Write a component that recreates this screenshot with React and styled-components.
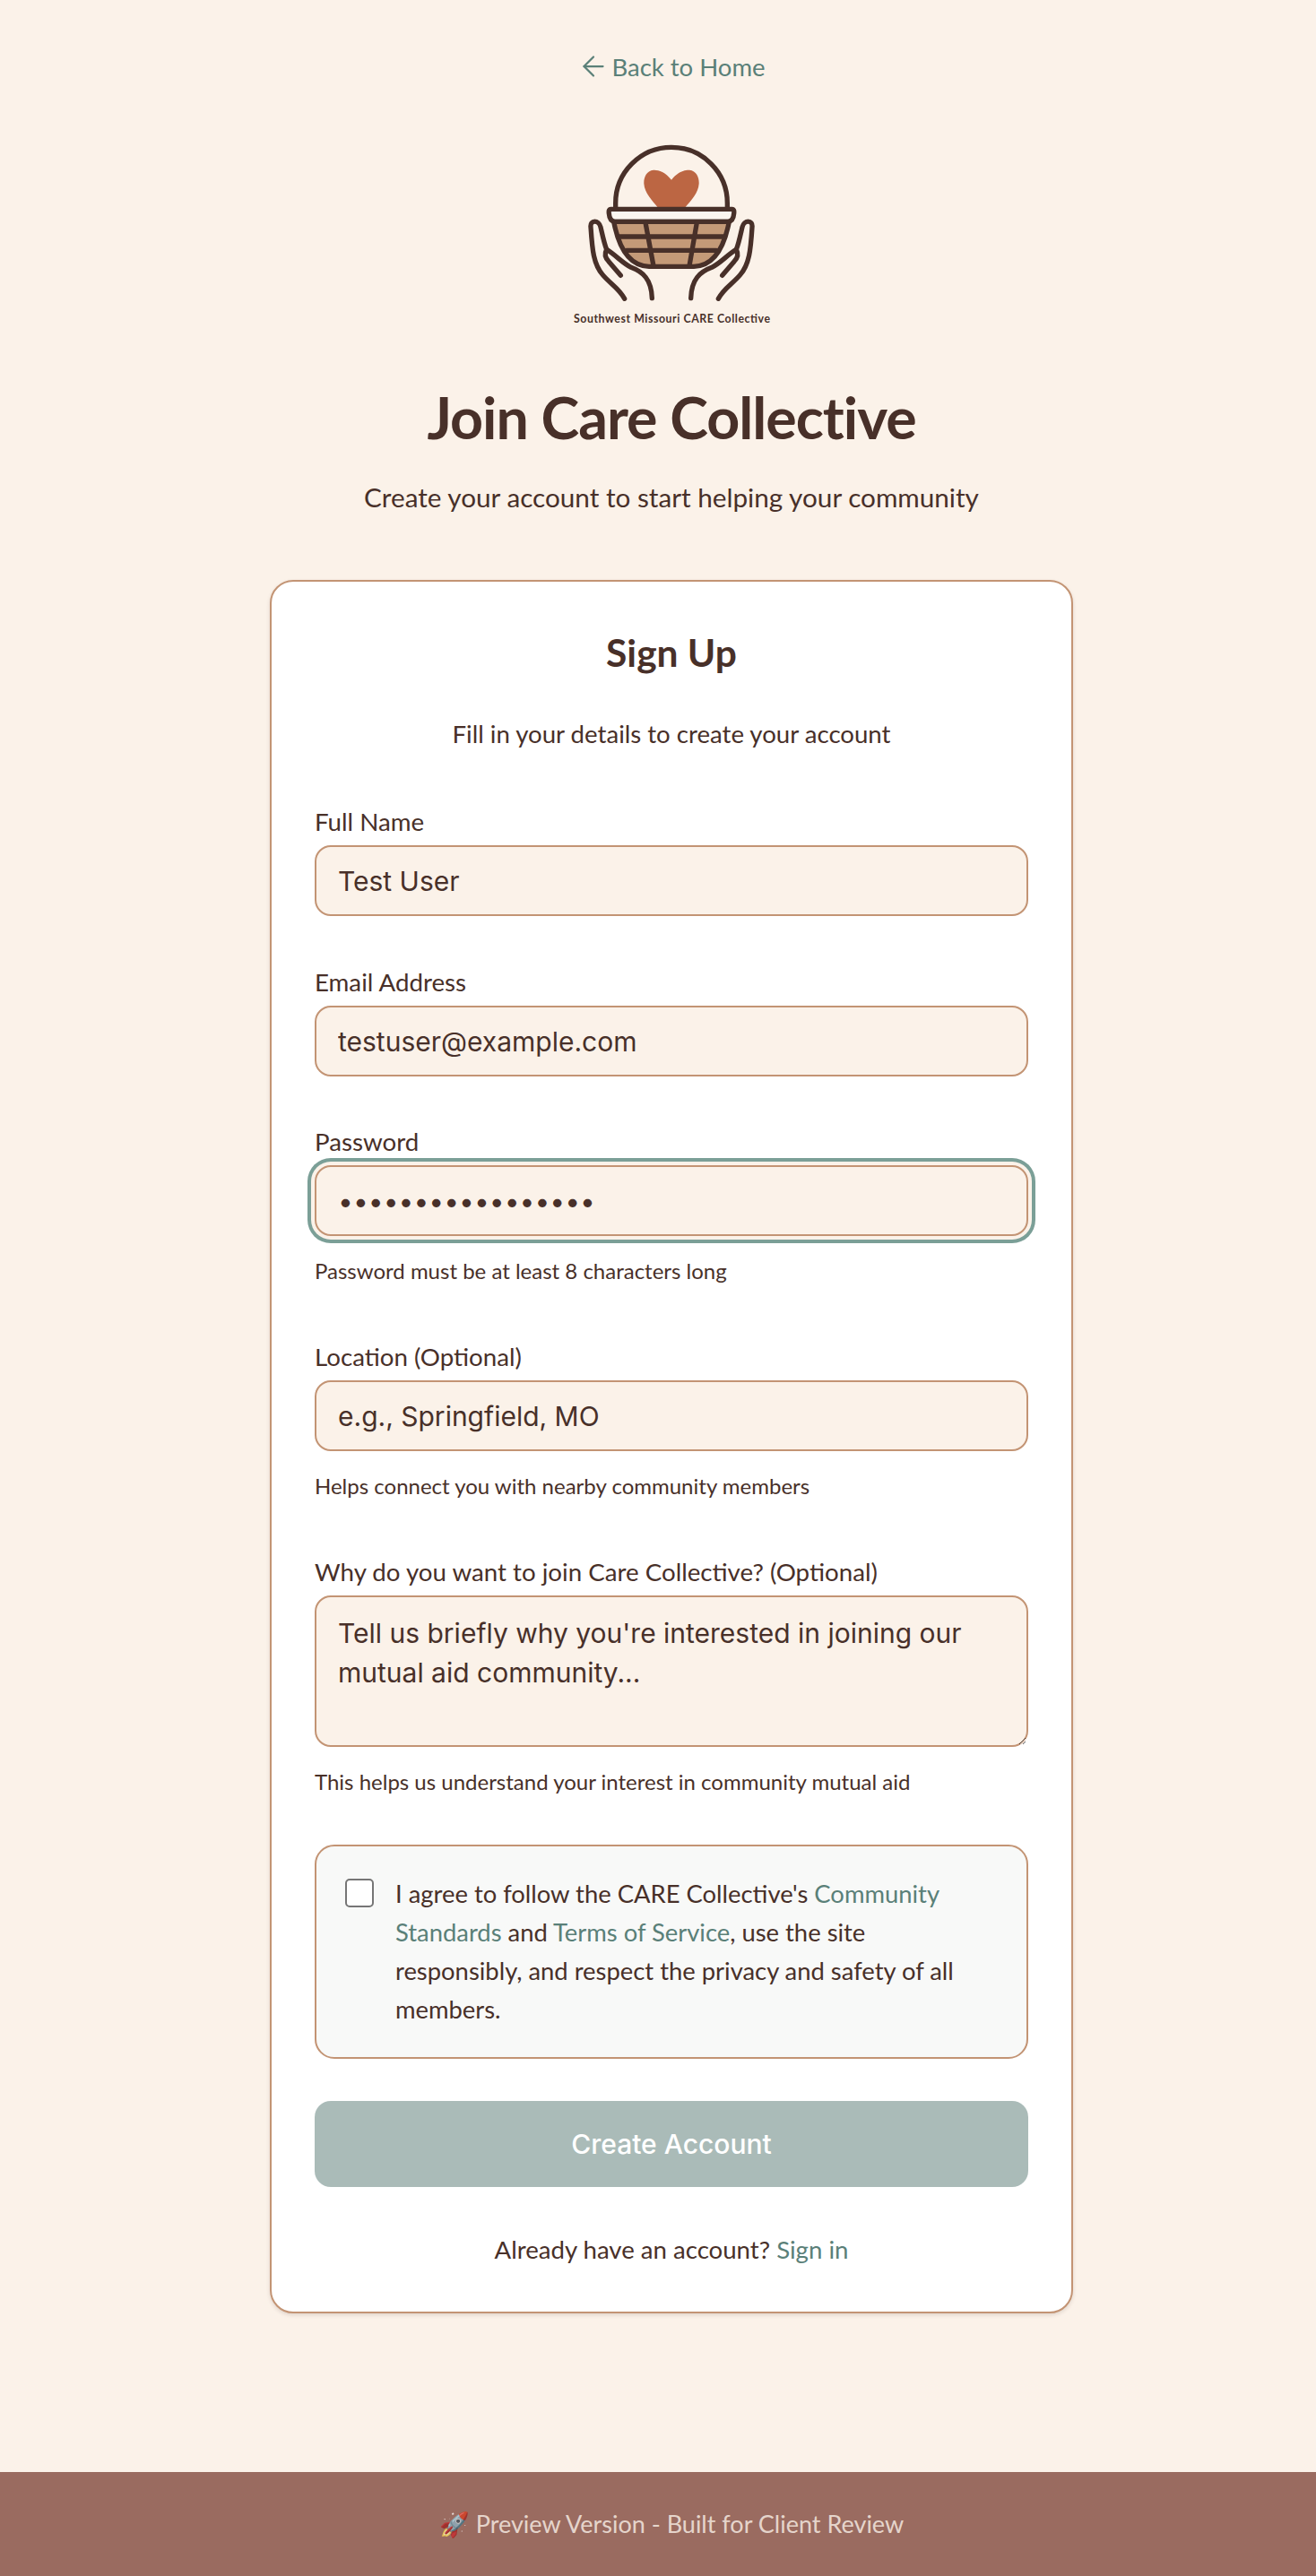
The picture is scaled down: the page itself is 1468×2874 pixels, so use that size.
import React from 'react';
import styled, { createGlobalStyle } from 'styled-components';
import { ArrowLeft } from 'lucide-react';

const cream = '#fbf2e9';
const brown = '#483029';
const teal = '#5a8078';
const tan = '#c39474';
const bodyFont = '"Lato", "Open Sans", sans-serif';
const fieldFont = '"Inter", "Liberation Sans", sans-serif';

const GlobalStyle = createGlobalStyle`
  html, body {
    margin: 0;
    padding: 0;
    background: ${cream};
  }
  * {
    box-sizing: border-box;
  }
`;

const Page = styled.div`
  width: 1468px;
  min-height: 2874px;
  display: flex;
  flex-direction: column;
  background: ${cream};
  color: ${brown};
  font-family: ${bodyFont};
`;

const Main = styled.main`
  flex: 1;
  width: 896px;
  margin-left: 301px;
  padding-top: 54px;
  display: flex;
  flex-direction: column;
  align-items: center;
`;

const BackLink = styled.a`
  display: flex;
  align-items: center;
  gap: 2px;
  height: 40px;
  color: ${teal};
  font-size: 27.5px;
  text-decoration: none;
`;

const LogoWrap = styled.div`
  width: 240px;
  height: 240px;
  margin-top: 56px;
`;

const Title = styled.h1`
  margin: 35px 0 0;
  font-size: 64.5px;
  line-height: 80px;
  font-weight: 700;
  letter-spacing: -1px;
`;

const Subtitle = styled.p`
  margin: 30px 0 0;
  font-size: 29.7px;
  line-height: 40px;
`;

const Card = styled.section`
  width: 100%;
  height: 1934px;
  margin-top: 72px;
  padding: 51px 48px 0;
  background: #fff;
  border: 2px solid ${tan};
  border-radius: 26px;
  box-shadow: 0 2px 4px rgba(72, 48, 41, 0.15);
`;

const CardTitle = styled.h2`
  margin: 0;
  text-align: center;
  font-size: 42.5px;
  line-height: 56px;
  font-weight: 700;
`;

const CardLead = styled.p`
  margin: 46px 0 0;
  text-align: center;
  font-size: 27.6px;
  line-height: 34px;
`;

const Field = styled.div`
  margin-top: ${(props) => props.$gap}px;
`;

const Label = styled.label`
  display: block;
  height: 28px;
  margin-bottom: 12px;
  font-size: 27.7px;
  line-height: 28px;
`;

const TextInput = styled.input`
  display: block;
  width: 100%;
  height: 79px;
  padding: 0 24px;
  background: ${cream};
  border: 2px solid ${tan};
  border-radius: 18px;
  color: ${brown};
  font-family: ${fieldFont};
  font-size: 30px;
  outline: none;
  box-shadow: ${(props) => (props.$focused ? `0 0 0 4px ${cream}, 0 0 0 8px #7b9f97` : 'none')};

  &::placeholder {
    color: ${brown};
    opacity: 1;
  }
`;

const TextArea = styled.textarea`
  display: block;
  width: 100%;
  height: 169px;
  padding: 18px 24px;
  background: ${cream};
  border: 2px solid ${tan};
  border-radius: 18px;
  color: ${brown};
  font-family: ${fieldFont};
  font-size: 30px;
  line-height: 44px;
  outline: none;
  resize: vertical;

  &::placeholder {
    color: ${brown};
    opacity: 1;
  }
`;

const Hint = styled.p`
  margin: 25px 0 0;
  font-size: 24px;
  line-height: 28px;
`;

const AgreeBox = styled.div`
  display: flex;
  align-items: flex-start;
  gap: 24px;
  height: 239px;
  margin-top: 56px;
  padding: 36px 60px 0 32px;
  background: #f8f9f8;
  border: 2px solid ${tan};
  border-radius: 22px;
`;

const Checkbox = styled.input`
  appearance: none;
  flex: none;
  width: 32px;
  height: 32px;
  margin: 0;
  background: #fff;
  border: 2px solid #767676;
  border-radius: 5px;
`;

const AgreeText = styled.label`
  margin-top: -5px;
  font-size: 27.4px;
  line-height: 43px;
`;

const TextLink = styled.a`
  color: ${teal};
  text-decoration: none;
`;

const SubmitButton = styled.button`
  display: block;
  width: 100%;
  height: 96px;
  margin-top: 47px;
  background: #aabbb8;
  border: none;
  border-radius: 18px;
  color: #fff;
  font-family: ${fieldFont};
  font-size: 30px;
  font-weight: 500;
`;

const SignInLine = styled.p`
  margin: 53px 0 0;
  text-align: center;
  font-size: 27.6px;
  line-height: 34px;
`;

const PreviewBar = styled.footer`
  width: 100%;
  height: 116px;
  padding-left: 30px;
  display: flex;
  align-items: center;
  justify-content: center;
  background: #9a6b60;
  color: rgba(251, 242, 233, 0.8);
  font-size: 27px;
`;

const handPaths = (
  <>
    <path d="M408 880 C390 845 360 830 335 800 C305 765 300 720 295 640 C292 615 322 615 328 640 C335 670 340 695 348 715 C380 735 400 760 430 775 C470 790 498 815 500 878" />
    <path d="M348 715 C340 730 345 745 355 755 L395 802" />
  </>
);

function BasketLogo() {
  return (
    <svg width="240" height="240" viewBox="205 330 720 720" role="img" aria-label="Southwest Missouri CARE Collective logo">
      <g fill="none" stroke={brown} strokeWidth="16" strokeLinecap="round" strokeLinejoin="round">
        <path d="M378 578 V560 A187 187 0 0 1 752 560 V578" />
        <path
          d="M565 482 C545 455 520 448 505 449 C480 452 472 475 473 495 C475 525 500 550 520 575 H610 C632 550 655 525 657 495 C658 475 650 452 625 449 C610 448 585 455 565 482 Z"
          fill="#bc6643"
          stroke="none"
        />
        <path d="M362 580 H768 Q776 580 774 595 Q772 620 755 622 H375 Q358 620 356 595 Q354 580 362 580 Z" fill="#fbf6f0" />
        <path d="M372 622 H758 C745 690 715 770 640 772 H490 C415 770 385 690 372 622 Z" fill="#c49a78" />
        <path d="M390 672 H742 M415 718 H715 M478 625 L505 770 M650 625 L625 770" />
        <g>{handPaths}</g>
        <g transform="translate(1130 0) scale(-1 1)">{handPaths}</g>
      </g>
      <text x="238" y="960" textLength="657" fontFamily={bodyFont} fontSize="37" fontWeight="700" fill={brown}>
        Southwest Missouri CARE Collective
      </text>
    </svg>
  );
}

export default function App() {
  return (
    <Page>
      <GlobalStyle />
      <Main>
        <BackLink href="#">
          <ArrowLeft size={36} strokeWidth={1.5} />
          Back to Home
        </BackLink>
        <LogoWrap>
          <BasketLogo />
        </LogoWrap>
        <Title>Join Care Collective</Title>
        <Subtitle>Create your account to start helping your community</Subtitle>
        <Card>
          <CardTitle>Sign Up</CardTitle>
          <CardLead>Fill in your details to create your account</CardLead>
          <Field $gap={67}>
            <Label>Full Name</Label>
            <TextInput readOnly value="Test User" />
          </Field>
          <Field $gap={60}>
            <Label>Email Address</Label>
            <TextInput readOnly value="testuser@example.com" />
          </Field>
          <Field $gap={59}>
            <Label>Password</Label>
            <TextInput $focused readOnly type="password" value="testpassword12345" />
            <Hint>Password must be at least 8 characters long</Hint>
          </Field>
          <Field $gap={68}>
            <Label>Location (Optional)</Label>
            <TextInput readOnly placeholder="e.g., Springfield, MO" />
            <Hint>Helps connect you with nearby community members</Hint>
          </Field>
          <Field $gap={68}>
            <Label>Why do you want to join Care Collective? (Optional)</Label>
            <TextArea placeholder="Tell us briefly why you're interested in joining our mutual aid community..." />
            <Hint>This helps us understand your interest in community mutual aid</Hint>
          </Field>
          <AgreeBox>
            <Checkbox type="checkbox" id="agree" />
            <AgreeText htmlFor="agree">
              I agree to follow the CARE Collective's <TextLink href="#">Community Standards</TextLink> and{' '}
              <TextLink href="#">Terms of Service</TextLink>, use the site responsibly, and respect the privacy and
              safety of all members.
            </AgreeText>
          </AgreeBox>
          <SubmitButton disabled>Create Account</SubmitButton>
          <SignInLine>
            Already have an account? <TextLink href="#">Sign in</TextLink>
          </SignInLine>
        </Card>
      </Main>
      <PreviewBar>🚀 Preview Version - Built for Client Review</PreviewBar>
    </Page>
  );
}
